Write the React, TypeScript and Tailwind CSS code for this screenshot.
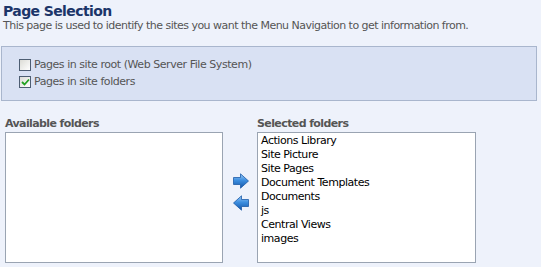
import React from "react";

const folders = [
  "Actions Library",
  "Site Picture",
  "Site Pages",
  "Document Templates",
  "Documents",
  "js",
  "Central Views",
  "images",
];

function Arrow({ dir }: { dir: "right" | "left" }) {
  const id = `g-${dir}`;
  return (
    <svg width="16" height="16" viewBox="0 0 16 16" className={dir === "left" ? "-scale-x-100" : ""}>
      <defs>
        <linearGradient id={id} x1="0" y1="0" x2="0" y2="1">
          <stop offset="0" stopColor="#9ccaf6" />
          <stop offset="0.45" stopColor="#3d8fe0" />
          <stop offset="1" stopColor="#1456a8" />
        </linearGradient>
      </defs>
      <path d="M0.5 4.5 H7.5 V0.8 L15.5 8 L7.5 15.2 V11.5 H0.5 Z" fill={`url(#${id})`} stroke="#1d5ca8" strokeWidth="0.8" strokeLinejoin="round" />
    </svg>
  );
}

function Check({ checked }: { checked?: boolean }) {
  return (
    <span className="w-[12px] h-[12px] border border-[#4d5d72] bg-gradient-to-br from-[#dcdcd6] to-white flex items-center justify-center">
      {checked && (
        <svg width="9" height="8" viewBox="0 0 9 8">
          <path d="M1 4 L3.5 6.5 L8 1.5" fill="none" stroke="#21a121" strokeWidth="1.8" />
        </svg>
      )}
    </span>
  );
}

export default function App() {
  return (
    <div className="w-[541px] h-[267px] bg-[#eef2fb] font-['DejaVu_Sans',sans-serif] overflow-hidden pt-[3px]">
      <h1 className="px-[3px] text-[14px] leading-[16px] font-bold text-[#1c3569] tracking-[-0.6px]">Page Selection</h1>
      <p className="px-[3px] text-[11px] leading-[13px] text-[#555] tracking-[-0.52px]">
        This page is used to identify the sites you want the Menu Navigation to get information from.
      </p>

      <div className="mt-[14px] ml-[1px] w-[536px] h-[55px] border border-[#a9b6cd] bg-[#d9e1f3] pl-[17px] pt-[11px] flex flex-col gap-[4px] text-[11px] leading-[13px] text-[#555] tracking-[-0.45px]">
        <label className="flex items-center gap-[3px]">
          <Check />
          Pages in site root (Web Server File System)
        </label>
        <label className="flex items-center gap-[3px]">
          <Check checked />
          Pages in site folders
        </label>
      </div>

      <div className="mt-[16px] flex">
        <div className="ml-[5px] flex flex-col">
          <div className="text-[11px] leading-[13px] font-bold text-[#555] tracking-[-0.6px]">Available folders</div>
          <div className="mt-[2px] w-[218px] h-[131px] bg-white border border-[#9aa4b2]" />
        </div>

        <div className="w-[34px] flex flex-col items-center justify-center gap-[6px] pt-[4px] pl-[1px]">
          <Arrow dir="right" />
          <Arrow dir="left" />
        </div>

        <div className="flex flex-col">
          <div className="text-[11px] leading-[13px] font-bold text-[#555] tracking-[-0.6px]">Selected folders</div>
          <div className="mt-[2px] w-[219px] h-[131px] bg-white border border-[#9aa4b2] pl-[3px] pt-[1px] text-[11px] leading-[14px] text-black tracking-[-0.45px]">
            {folders.map((f) => (
              <div key={f}>{f}</div>
            ))}
          </div>
        </div>
      </div>
    </div>
  );
}
